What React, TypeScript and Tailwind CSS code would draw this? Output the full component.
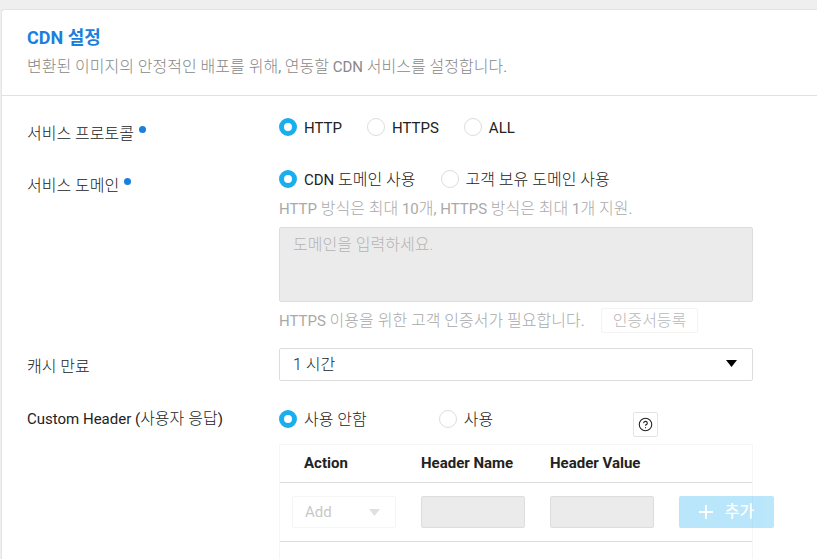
import { useState, FC, ReactNode } from 'react';
import { CircleHelp } from 'lucide-react';

// Hangul runs are set one step larger and lighter than the Latin text around them
const Text: FC<{ children: string }> = ({ children }) => (
  <span>
    {children.split(/([가-힣]+(?: [가-힣]+)*)/).map((part, i) =>
      i % 2 === 1 ? (
        <span key={i} className="text-base leading-5 font-light">
          {part}
        </span>
      ) : (
        part
      )
    )}
  </span>
);

interface RadioOptionProps {
  name: string;
  value: string;
  label: string;
  current: string;
  onSelect: (value: string) => void;
}

const RadioOption: FC<RadioOptionProps> = ({ name, value, label, current, onSelect }) => (
  <label className="flex h-5 cursor-pointer items-center gap-[7px]">
    <input
      type="radio"
      name={name}
      value={value}
      checked={current === value}
      onChange={() => onSelect(value)}
      className="size-[18px] shrink-0 cursor-pointer appearance-none rounded-full border border-[#dddddd] bg-white checked:border-5 checked:border-[#1aaeef]"
    />
    <span className="pt-0.5">
      <Text>{label}</Text>
    </span>
  </label>
);

interface RowLabelProps {
  id?: string;
  htmlFor?: string;
  required?: boolean;
  className?: string;
  children: string;
}

const RowLabel: FC<RowLabelProps> = ({ id, htmlFor, required, className = '', children }) => (
  <div className={`flex h-5 w-[252px] shrink-0 items-start gap-[5px] ${className}`}>
    <label id={id} htmlFor={htmlFor}>
      <Text>{children}</Text>
    </label>
    {required && <span className="mt-0.5 size-[7px] rounded-full bg-[#1b7fdb]" />}
  </div>
);

const Row: FC<{ className?: string; children: ReactNode }> = ({ className = '', children }) => (
  <div className={`flex ${className}`}>{children}</div>
);

const Arrow: FC<{ className: string }> = ({ className }) => (
  <svg viewBox="0 0 11 7" className={`pointer-events-none absolute h-[7px] w-[11px] ${className}`} fill="currentColor">
    <path d="M0 0h11L5.5 7z" />
  </svg>
);

export default function App() {
  const [protocol, setProtocol] = useState('http');
  const [domain, setDomain] = useState('cdn');
  const [cache, setCache] = useState('1h');
  const [customHeader, setCustomHeader] = useState('off');

  const domainDisabled = domain !== 'own';
  const headerDisabled = customHeader === 'off';

  return (
    <div className="flex min-h-screen flex-col bg-[#efefef] pt-[9px] pl-px font-[Roboto,'Noto_Sans_CJK_KR',sans-serif] text-[15px] leading-5 text-[#222222]">
      <section className="flex flex-1 flex-col rounded-tl border-t border-l border-[#e4e4e4] bg-white">
        <header className="border-b border-[#e1e1e1] px-[25px] pt-4 pb-[18px]">
          <h2 className="text-lg leading-6 font-bold text-[#1b7fdb]">CDN 설정</h2>
          <p className="mt-[7px] h-5 text-[#888888]">
            <Text>변환된 이미지의 안정적인 배포를 위해, 연동할 CDN 서비스를 설정합니다.</Text>
          </p>
        </header>

        <form className="flex flex-1 flex-col pt-[21px] pr-16 pl-[25px]" onSubmit={(e) => e.preventDefault()}>
          <Row>
            <RowLabel id="protocol-label" required className="mt-[7px]">
              서비스 프로토콜
            </RowLabel>
            <div role="radiogroup" aria-labelledby="protocol-label" className="flex gap-[25px]">
              <RadioOption name="protocol" value="http" label="HTTP" current={protocol} onSelect={setProtocol} />
              <RadioOption name="protocol" value="https" label="HTTPS" current={protocol} onSelect={setProtocol} />
              <RadioOption name="protocol" value="all" label="ALL" current={protocol} onSelect={setProtocol} />
            </div>
          </Row>

          <Row className="mt-[25px]">
            <RowLabel id="domain-label" required className="mt-[7px]">
              서비스 도메인
            </RowLabel>
            <div className="flex-1">
              <div role="radiogroup" aria-labelledby="domain-label" className="flex gap-[25px]">
                <RadioOption name="domain" value="cdn" label="CDN 도메인 사용" current={domain} onSelect={setDomain} />
                <RadioOption name="domain" value="own" label="고객 보유 도메인 사용" current={domain} onSelect={setDomain} />
              </div>
              <p className="mt-2.5 h-5 text-[#a9a9a9]">
                <Text>HTTP 방식은 최대 10개, HTTPS 방식은 최대 1개 지원.</Text>
              </p>
              <textarea
                aria-labelledby="domain-label"
                placeholder="도메인을 입력하세요."
                disabled={domainDisabled}
                className="mt-2 block h-[75px] w-full resize-none rounded-xs border border-[#dddddd] px-[13px] py-[7px] text-base leading-5 font-light placeholder:text-[#b4b4b4] disabled:bg-[#ebebeb]"
              />
              <div className="mt-1.5 flex items-center gap-4 text-[#a9a9a9]">
                <p className="h-5">
                  <Text>HTTPS 이용을 위한 고객 인증서가 필요합니다.</Text>
                </p>
                <button
                  type="button"
                  disabled={domainDisabled}
                  className="flex h-[25px] items-center rounded-xs border border-[#dddddd] px-[11px] text-[#666666] disabled:border-[#f3f3f3] disabled:text-[#b8b8b8]"
                >
                  <Text>인증서등록</Text>
                </button>
              </div>
            </div>
          </Row>

          <Row className="mt-[15px]">
            <RowLabel htmlFor="cache" className="mt-[9px]">
              캐시 만료
            </RowLabel>
            <div className="relative flex-1">
              <select
                id="cache"
                value={cache}
                onChange={(e) => setCache(e.target.value)}
                className="block h-[33px] w-full appearance-none rounded-xs border border-[#dddddd] bg-white px-[13px] text-base leading-5 font-light"
              >
                <option value="1h">1 시간</option>
                <option value="6h">6 시간</option>
                <option value="24h">24 시간</option>
              </select>
              <Arrow className="top-3 right-4 text-black" />
            </div>
          </Row>

          <Row className="mt-[28px] flex-1">
            <RowLabel id="custom-header-label">Custom Header (사용자 응답)</RowLabel>
            <div className="flex min-w-0 flex-1 flex-col">
              <div className="flex items-start">
                <div role="radiogroup" aria-labelledby="custom-header-label" className="flex gap-[72px]">
                  <RadioOption name="custom" value="off" label="사용 안함" current={customHeader} onSelect={setCustomHeader} />
                  <RadioOption name="custom" value="on" label="사용" current={customHeader} onSelect={setCustomHeader} />
                </div>
                <button
                  type="button"
                  aria-label="도움말"
                  className="mt-[3px] mr-[95px] ml-auto flex size-[25px] items-center justify-center rounded-xs border border-[#e4e4e4]"
                >
                  <CircleHelp className="size-[15px]" strokeWidth={1.75} />
                </button>
              </div>

              <div className="mt-[7px] flex-1 rounded-t-xs border border-b-0 border-[#f5f5f5]">
                <table className="w-full table-fixed">
                  <colgroup>
                    <col className="w-[129px]" />
                    <col className="w-[129px]" />
                    <col className="w-[129px]" />
                    <col />
                  </colgroup>
                  <thead>
                    <tr className="h-[37px] border-b border-[#dddddd] text-left">
                      <th className="pl-6 font-bold">Action</th>
                      <th className="pl-3 font-bold">Header Name</th>
                      <th className="pl-3 font-bold">Header Value</th>
                      <td />
                    </tr>
                  </thead>
                  <tbody>
                    <tr className="h-[59px] border-b border-[#dddddd]">
                      <td className="pr-[13px] pl-3">
                        <div className="relative">
                          <select
                            aria-label="Action"
                            disabled={headerDisabled}
                            className="block h-8 w-full appearance-none rounded-xs border border-[#dddddd] bg-white px-3 disabled:border-[#f5f5f5] disabled:text-[#c8c8c8] disabled:opacity-100"
                          >
                            <option>Add</option>
                            <option>Delete</option>
                          </select>
                          <Arrow className="top-[13px] right-4 text-[#e0e0e0]" />
                        </div>
                      </td>
                      <td className="pr-[13px] pl-3">
                        <input
                          type="text"
                          aria-label="Header Name"
                          disabled={headerDisabled}
                          className="block h-8 w-full rounded-xs border border-[#dddddd] px-3 disabled:bg-[#ebebeb]"
                        />
                      </td>
                      <td className="pr-[13px] pl-3">
                        <input
                          type="text"
                          aria-label="Header Value"
                          disabled={headerDisabled}
                          className="block h-8 w-full rounded-xs border border-[#dddddd] px-3 disabled:bg-[#ebebeb]"
                        />
                      </td>
                      <td className="pl-3">
                        <button
                          type="button"
                          disabled={headerDisabled}
                          className="flex h-8 w-[95px] items-center justify-center gap-3 rounded-xs bg-[#1aaeef] text-base leading-5 font-medium text-white disabled:opacity-30"
                        >
                          <svg viewBox="0 0 14 14" className="size-3.5" fill="none" stroke="currentColor" strokeWidth="2">
                            <path d="M7 0v14M0 7h14" />
                          </svg>
                          추가
                        </button>
                      </td>
                    </tr>
                  </tbody>
                </table>
              </div>
            </div>
          </Row>
        </form>
      </section>
    </div>
  );
}
